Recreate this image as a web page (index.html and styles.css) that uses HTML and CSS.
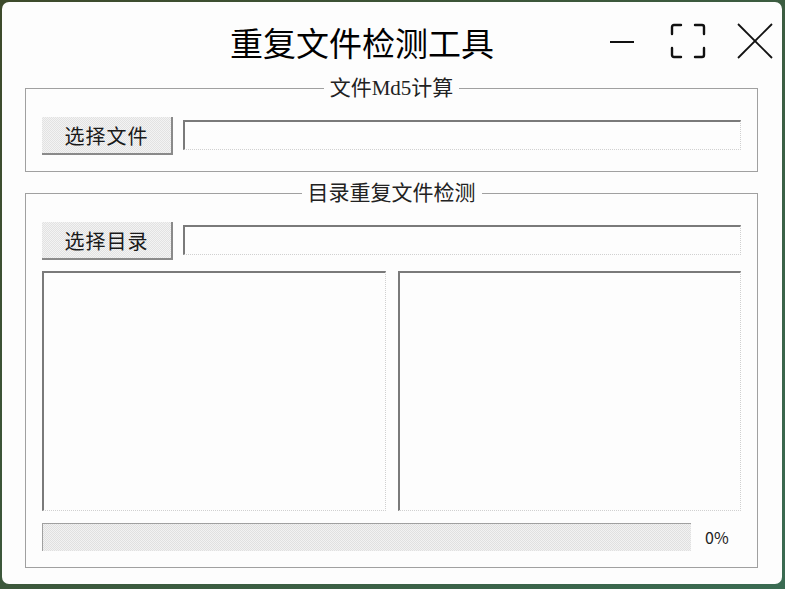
FILE: index.html
```html
<!DOCTYPE html>
<html lang="zh">
<head>
<meta charset="utf-8">
<title>重复文件检测工具</title>
<link rel="stylesheet" href="styles.css">
</head>
<body>
<div class="window">
  <header class="titlebar">
    <h1 class="title">重复文件检测工具</h1>
    <div class="controls">
      <svg class="ctl-min" width="24" height="24" viewBox="0 0 24 24"><line x1="0" y1="13" x2="24" y2="13" stroke="#111" stroke-width="2"/></svg>
      <svg class="ctl-max" width="36" height="36" viewBox="0 0 36 36" fill="none" stroke="#111" stroke-width="2.4" stroke-linecap="round" stroke-linejoin="round">
        <path d="M2 11 V4 Q2 2 4 2 H11"/>
        <path d="M25 2 H32 Q34 2 34 4 V11"/>
        <path d="M34 25 V32 Q34 34 32 34 H25"/>
        <path d="M11 34 H4 Q2 34 2 32 V25"/>
      </svg>
      <svg class="ctl-close" width="36" height="36" viewBox="0 0 36 36" stroke="#111" stroke-width="1.8"><line x1="1" y1="1" x2="35" y2="35"/><line x1="35" y1="1" x2="1" y2="35"/></svg>
    </div>
  </header>
  <main class="content">
    <fieldset class="group group-md5">
      <legend class="legend">文件Md5计算</legend>
      <div class="row">
        <button class="btn">选择文件</button>
        <div class="field"></div>
      </div>
    </fieldset>
    <fieldset class="group group-dir">
      <legend class="legend">目录重复文件检测</legend>
      <div class="row">
        <button class="btn">选择目录</button>
        <div class="field"></div>
      </div>
      <div class="lists">
        <div class="listbox"></div>
        <div class="listbox"></div>
      </div>
      <div class="progress-row">
        <div class="progress"></div>
        <span class="percent">0%</span>
      </div>
    </fieldset>
  </main>
</div>
</body>
</html>
```

FILE: styles.css
```css
html, body {
  margin: 0;
  padding: 0;
}
body {
  width: 785px;
  height: 589px;
  overflow: hidden;
  background: linear-gradient(135deg, #3d4a2b 0%, #3c5a3e 50%, #3a6b52 100%);
  font-family: "Liberation Serif", "Noto Sans CJK SC", serif;
}
.window {
  margin: 2px 0 0 2px;
  width: 780px;
  height: 582px;
  background: #fdfdfd;
  border-radius: 7px;
  display: flex;
  flex-direction: column;
}
.titlebar {
  height: 76px;
  display: flex;
  align-items: center;
  flex-shrink: 0;
}
.title {
  margin: 4px 0 0 228px;
  font-family: "Noto Sans CJK SC", sans-serif;
  font-weight: 400;
  font-size: 33px;
  line-height: 40px;
  color: #000;
  letter-spacing: 0;
}
.controls {
  margin-left: auto;
  margin-right: 9px;
  display: flex;
  align-items: center;
}
.ctl-min {
  margin-right: 36px;
  margin-top: 2px;
}
.ctl-max {
  margin-right: 31px;
  margin-top: 2px;
}
.ctl-close {
  margin-top: 2px;
}
.content {
  padding: 0 24px 0 23px;
  display: flex;
  flex-direction: column;
}
.group {
  margin: 0;
  border: 1px solid #a0a0a0;
  padding: 19px 16px 16px 16px;
  min-width: 0;
}
.group-dir {
  margin-top: 11px;
}
.legend {
  margin: 0 auto;
  padding: 0 6px;
  font-size: 21px;
  line-height: 20px;
  color: #222;
}
.row {
  display: flex;
  align-items: center;
  gap: 10px;
}
.btn {
  width: 131px;
  height: 38px;
  box-sizing: border-box;
  margin: 0;
  padding: 0;
  border: none;
  border-right: 2px solid #8a8a8a;
  border-bottom: 2px solid #8a8a8a;
  background: repeating-conic-gradient(#e2e2e2 0 25%, #f3f3f3 0 50%) 0 0 / 2px 2px;
  font-family: "Liberation Serif", "Noto Sans CJK SC", serif;
  font-size: 20px;
  color: #1a1a1a;
  letter-spacing: 1px;
}
.field {
  flex: 1;
  height: 30px;
  box-sizing: border-box;
  border-top: 2px solid #7a7a7a;
  border-left: 2px solid #7a7a7a;
  border-right: 1px dotted #d0d0d0;
  border-bottom: 1px dotted #d0d0d0;
  margin-top: -2px;
}
.lists {
  margin-top: 11px;
  display: flex;
  gap: 12px;
}
.listbox {
  flex: 1;
  height: 240px;
  box-sizing: border-box;
  border-top: 2px solid #7a7a7a;
  border-left: 2px solid #7a7a7a;
  border-right: 1px dotted #d0d0d0;
  border-bottom: 1px dotted #d0d0d0;
}
.progress-row {
  margin-top: 12px;
  display: flex;
  align-items: center;
}
.progress {
  width: 649px;
  height: 28px;
  box-sizing: border-box;
  border-top: 1px solid #a0a0a0;
  border-left: 1px solid #a0a0a0;
  background: repeating-conic-gradient(#e0e0e0 0 25%, #f2f2f2 0 50%) 0 0 / 2px 2px;
}
.percent {
  margin-left: 14px;
  font-family: "Noto Sans CJK SC", sans-serif;
  font-size: 16px;
  color: #222;
}
```
